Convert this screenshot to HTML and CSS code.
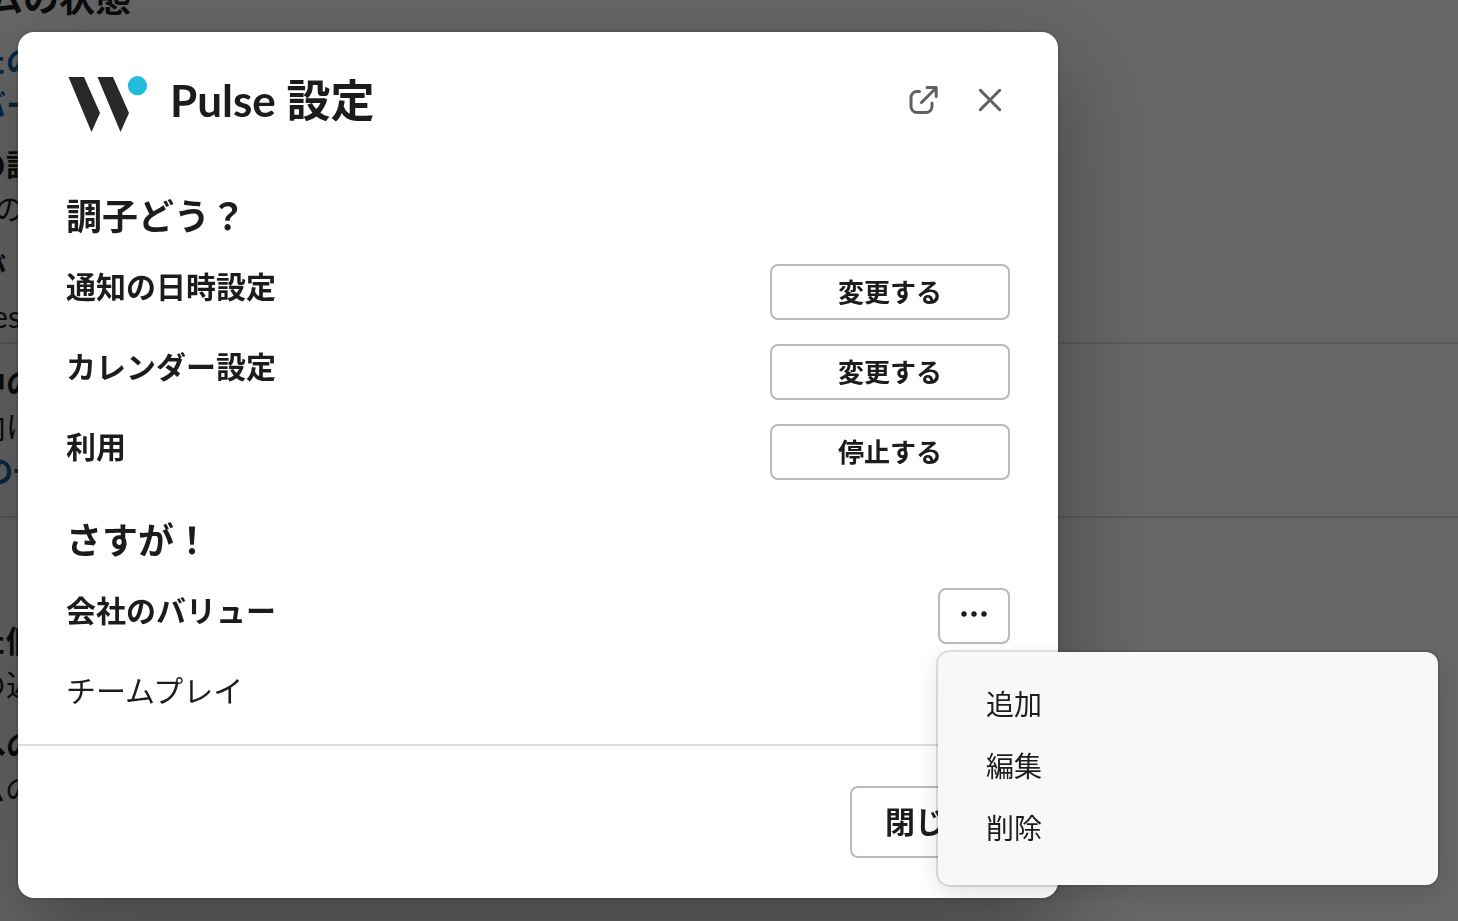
FILE: index.html
```
<!DOCTYPE html>
<html lang="ja">
<head>
<meta charset="UTF-8">
<meta name="viewport" content="width=device-width, initial-scale=1.0">
<title>Pulse 設定</title>
<link rel="stylesheet" href="styles.css">
</head>
<body>

    <!-- App home behind the modal -->
    <main class="home">
        <h1 class="home-title">チームの状態</h1>
        <section class="home-section summary">
            <div>
                <p><a href="#you">あなたの</a></p>
                <p><a href="#members">メンバー</a></p>
            </div>
            <div>
                <p><b>今週の設定</b></p>
                <p>Pulse の</p>
            </div>
            <div class="spaced">
                <p><b>調子が</b></p>
                <p>Wellness</p>
            </div>
        </section>
        <section class="home-section running">
            <p><b>進行中の</b></p>
            <p>社内向け</p>
            <p><a href="#company">会社 の一覧</a></p>
        </section>
        <section class="home-section received">
            <div>
                <p><b>された個人</b></p>
                <p>最新の近況</p>
            </div>
            <div>
                <p><b>会社への</b></p>
                <p>チームの</p>
            </div>
        </section>
    </main>

    <div class="overlay">
        <div class="modal" role="dialog" aria-modal="true" aria-labelledby="modalTitle">
            <header class="modal-header">
                <svg class="logo" viewBox="0 0 82 56" aria-hidden="true">
                    <path fill="#282828" d="M2.500 1H18L34 37L25.500 56ZM31.500 1H47L63 37L54.500 56Z"/>
                    <circle fill="#22bddd" cx="71.500" cy="9.700" r="9.600"/>
                </svg>
                <h2 class="modal-title" id="modalTitle">Pulse 設定</h2>
                <button class="icon-button" type="button" aria-label="新しいウィンドウで開く">
                    <svg width="32" height="32" viewBox="0 0 32 32">
                        <path d="M11.500 7.500H9A6 6 0 0 0 3 13.500V22.500A6 6 0 0 0 9 28.500H18A6 6 0 0 0 24 22.500V19M13.500 18.500L28 4M19 3.500H28.200V12.500"/>
                    </svg>
                </button>
                <button class="icon-button" type="button" aria-label="閉じる">
                    <svg width="32" height="32" viewBox="0 0 32 32">
                        <path d="M6.300 6.300L25.700 25.700M25.700 6.300L6.300 25.700"/>
                    </svg>
                </button>
            </header>

            <div class="modal-body">
                <h3>調子どう？</h3>
                <div class="row">
                    <span class="label" id="notify">通知の日時設定</span>
                    <button class="button" type="button" aria-describedby="notify">変更する</button>
                </div>
                <div class="row">
                    <span class="label" id="calendar">カレンダー設定</span>
                    <button class="button" type="button" aria-describedby="calendar">変更する</button>
                </div>
                <div class="row">
                    <span class="label" id="usage">利用</span>
                    <button class="button" type="button" aria-describedby="usage">停止する</button>
                </div>

                <h3 class="next">さすが！</h3>
                <div class="row">
                    <span class="label" id="values">会社のバリュー</span>
                    <div class="overflow">
                        <button class="button more" type="button" aria-label="その他" aria-haspopup="menu" aria-expanded="true">
                            <svg width="28" height="8" viewBox="0 0 28 8">
                                <circle cx="4" cy="4" r="2.700"/>
                                <circle cx="14" cy="4" r="2.700"/>
                                <circle cx="24" cy="4" r="2.700"/>
                            </svg>
                        </button>
                        <div class="menu" role="menu">
                            <button type="button" role="menuitem">追加</button>
                            <button type="button" role="menuitem">編集</button>
                            <button type="button" role="menuitem">削除</button>
                        </div>
                    </div>
                </div>
                <p class="value">チームプレイ</p>
            </div>

            <footer class="modal-footer">
                <button class="button close" type="button">閉じる</button>
            </footer>
        </div>
    </div>

</body>
</html>
```
FILE: styles.css
```
* {
    box-sizing: border-box;
}

body {
    margin: 0;
    height: 100vh;
    overflow: hidden;
    background-color: #ffffff;
    color: #1d1c1d;
    font-family: Lato, "Noto Sans CJK JP", sans-serif;
    font-size: 30px;
    line-height: 44px;
}

h1, h2, h3, p {
    margin: 0;
}

button {
    font-family: inherit;
    color: inherit;
    cursor: pointer;
}

/* App home, scrolled part way under the modal */
.home {
    margin-top: -22px;
}

.home-title {
    margin-left: -84px;
    font-size: 36px;
    line-height: 40px;
}

.home-section {
    display: flex;
    flex-direction: column;
    border-bottom: 2px solid #dddddd;
}

.home-section p {
    margin-left: -84px;
    white-space: nowrap;
}

.home-section a {
    color: #1264a3;
    font-weight: bold;
    text-decoration: none;
}

.summary {
    gap: 16px;
    padding: 20px 0 4px;
}

.spaced {
    display: flex;
    flex-direction: column;
    gap: 4px;
}

.running {
    padding: 16px 0 24px;
}

.received {
    gap: 16px;
    padding: 100px 0;
    border-bottom: none;
}

.overlay {
    position: fixed;
    top: 0;
    right: 0;
    bottom: 0;
    left: 0;
    padding: 32px 18px;
    background-color: rgba(0, 0, 0, 0.6);
}

.modal {
    max-width: 1040px;
    border-radius: 16px;
    background-color: #ffffff;
    box-shadow: 0 0 0 2px rgba(29, 28, 29, 0.13), 0 36px 96px rgba(0, 0, 0, 0.35);
}

.modal-header {
    display: flex;
    align-items: flex-start;
    gap: 18px;
    padding: 44px 44px 0 48px;
}

.logo {
    width: 82px;
    height: 56px;
}

.modal-title {
    flex: 1;
    padding-left: 4px;
    font-size: 44px;
    font-weight: bold;
    line-height: 48px;
}

.icon-button {
    display: flex;
    align-items: center;
    justify-content: center;
    width: 48px;
    height: 48px;
    padding: 0;
    border: none;
    border-radius: 8px;
    background: none;
}

.icon-button path {
    fill: none;
    stroke: #616061;
    stroke-width: 3;
    stroke-linecap: round;
    stroke-linejoin: round;
}

.modal-body {
    display: flex;
    flex-direction: column;
    gap: 24px;
    padding: 60px 48px 32px;
}

.modal-body h3 {
    font-size: 36px;
    font-weight: bold;
    line-height: 48px;
}

.modal-body .next {
    margin-top: 12px;
}

.row {
    display: flex;
    align-items: flex-start;
    justify-content: space-between;
}

.label, .value {
    line-height: 44px;
}

.label {
    font-weight: bold;
}

.button {
    width: 240px;
    height: 56px;
    padding: 0 0 4px;
    border: 2px solid #bbbabb;
    border-radius: 8px;
    background-color: #ffffff;
    font-size: 26px;
    font-weight: bold;
}

.more {
    display: flex;
    justify-content: center;
    width: 72px;
    padding-top: 20px;
}

.more circle {
    fill: #1d1c1d;
}

.overflow {
    position: relative;
}

.menu {
    position: absolute;
    top: calc(100% + 8px);
    left: 0;
    width: 500px;
    padding: 22px 0 25px;
    border-radius: 12px;
    background-color: #f8f8f8;
    box-shadow: 0 0 0 2px rgba(29, 28, 29, 0.13), 0 8px 24px rgba(0, 0, 0, 0.12);
}

.menu button {
    display: block;
    width: 100%;
    height: 62px;
    padding: 0 48px 4px;
    border: none;
    background: none;
    font-size: 28px;
    text-align: left;
}

.menu button:hover {
    background-color: #1264a3;
    color: #ffffff;
}

.modal-footer {
    display: flex;
    justify-content: flex-end;
    padding: 40px 48px;
    border-top: 2px solid #dddddd;
}

.close {
    width: 160px;
    height: 72px;
    font-size: 30px;
}
```
